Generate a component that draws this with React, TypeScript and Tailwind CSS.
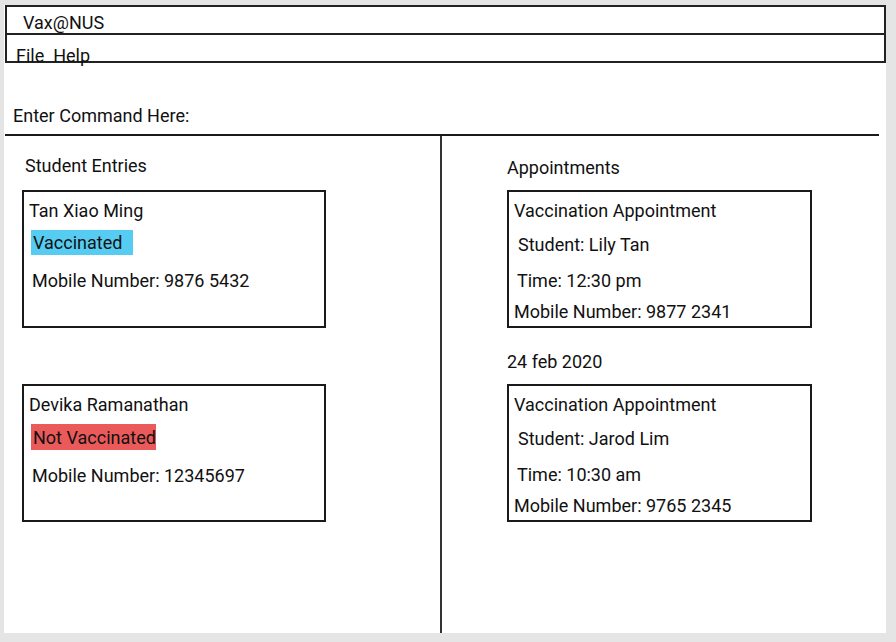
const font = { fontFamily: 'Roboto, "Liberation Sans", sans-serif' };

type Student = { name: string; vaccinated: boolean; mobile: string };
type Appt = { student: string; time: string; mobile: string };

const students: Student[] = [
  { name: 'Tan Xiao Ming', vaccinated: true, mobile: '9876 5432' },
  { name: 'Devika Ramanathan', vaccinated: false, mobile: '12345697' },
];

function StudentCard({ s }: { s: Student }) {
  return (
    <div className="w-[304px] h-[138px] border-2 border-[#1a1a1a] pl-[5px] pt-[9px]">
      <div className="leading-[20px]">{s.name}</div>
      {s.vaccinated ? (
        <div className="mt-[9px] ml-[2px] h-[25px] w-[102px] bg-[#56ccf2] pl-[2px] leading-[26px]">Vaccinated</div>
      ) : (
        <div className="mt-[9px] ml-[2px] h-[26px] w-[125px] bg-[#eb5a5a] pl-[2px] leading-[28px] whitespace-nowrap">Not Vaccinated</div>
      )}
      <div className="mt-[16px] ml-[3px] leading-[20px]">Mobile Number: {s.mobile}</div>
    </div>
  );
}

function ApptCard({ a }: { a: Appt }) {
  return (
    <div className="w-[305px] h-[138px] border-2 border-[#1a1a1a] pl-[5px] pt-[9px]">
      <div className="leading-[20px]">Vaccination Appointment</div>
      <div className="mt-[14px] ml-[4px] leading-[20px]">Student: {a.student}</div>
      <div className="mt-[16px] ml-[3px] leading-[20px]">Time: {a.time}</div>
      <div className="mt-[11px] leading-[20px]">Mobile Number: {a.mobile}</div>
    </div>
  );
}

export default function App() {
  return (
    <div className="w-[896px] h-[642px] bg-[#e5e5e5] pt-[5px] pl-[4px] text-[18px] text-[#111]" style={font}>
      <div className="w-[882px] h-[628px] bg-white flex flex-col">
        {/* window title + menu */}
        <div className="ml-[1px] w-[881px] h-[30px] border-2 border-[#222] pl-[16px] leading-[31px] overflow-visible">Vax@NUS</div>
        <div className="ml-[1px] w-[881px] h-[28px] border-2 border-t-0 border-[#222] pl-[9px] leading-[20px] pt-[11px] overflow-visible whitespace-nowrap">
          File&nbsp; Help
        </div>

        <div className="mt-[43px] ml-[9px] leading-[20px]">Enter Command Here:</div>
        <div className="mt-[8px] ml-[1px] w-[874px] h-[2px] bg-[#1a1a1a]" />

        <div className="flex flex-1">
          {/* students */}
          <div className="w-[436px] flex flex-col pl-[18px]">
            <div className="mt-[20px] ml-[3px] leading-[20px]">Student Entries</div>
            <div className="mt-[14px] flex flex-col gap-[56px]">
              {students.map((s) => (
                <StudentCard key={s.name} s={s} />
              ))}
            </div>
          </div>
          <div className="w-[2px] bg-[#333]" />
          {/* appointments */}
          <div className="flex flex-col pl-[65px]">
            <div className="mt-[22px] leading-[20px]">Appointments</div>
            <div className="mt-[12px]">
              <ApptCard a={{ student: 'Lily Tan', time: '12:30 pm', mobile: '9877 2341' }} />
            </div>
            <div className="mt-[24px] leading-[20px]">24 feb 2020</div>
            <div className="mt-[12px]">
              <ApptCard a={{ student: 'Jarod Lim', time: '10:30 am', mobile: '9765 2345' }} />
            </div>
          </div>
        </div>
      </div>
    </div>
  );
}
